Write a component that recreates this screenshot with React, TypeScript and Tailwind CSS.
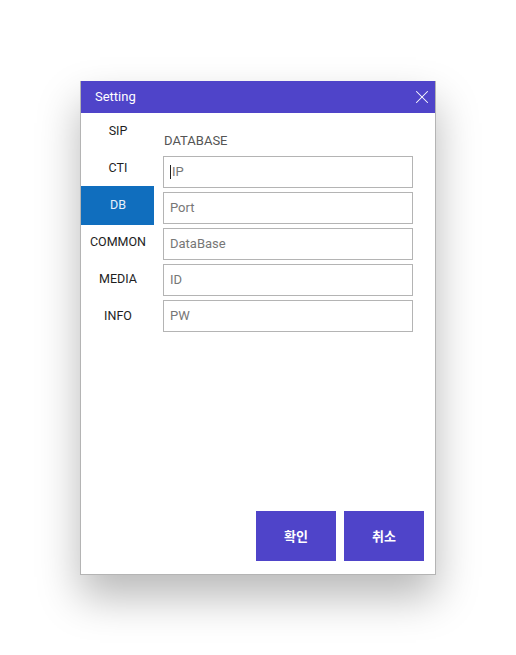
import { X } from "lucide-react";

const menus = ["SIP", "CTI", "DB", "COMMON", "MEDIA", "INFO"];
const fields = ["IP", "Port", "DataBase", "ID", "PW"];

export default function App() {
  return (
    <div className="h-screen w-full bg-white flex items-center justify-center font-['Roboto',sans-serif]">
      <div className="w-[356px] h-[494px] bg-white border border-t-0 border-[#b4b4b4] shadow-[0_22px_40px_rgba(0,0,0,0.28)] flex flex-col">
        {/* Header */}
        <div className="h-8 bg-[#4f44c9] flex items-center justify-between pl-[14px] pr-[2px]">
          <span className="text-[13px] text-white">Setting</span>
          <X className="w-[22px] h-[22px] text-white" strokeWidth={1.1} />
        </div>

        {/* Body */}
        <div className="flex-1 flex">
          {/* Sidebar */}
          <div className="w-[73px] flex flex-col">
            {menus.map((m) =>
              m === "DB" ? (
                <div
                  key={m}
                  className="h-[39px] -my-px flex items-center justify-center pl-px bg-[#106ebe] text-[12.5px] text-[#e8f0fa]"
                >
                  {m}
                </div>
              ) : (
                <div
                  key={m}
                  className="h-[37px] flex items-center justify-center pl-px text-[12.5px] text-[#1e1e1e]"
                >
                  {m}
                </div>
              )
            )}
          </div>

          {/* Content */}
          <div className="flex-1 flex flex-col pl-[9px] pr-[22px] pt-5">
            <div className="h-4 leading-4 mb-[7px] pl-px text-[13px] text-[#555]">DATABASE</div>
            <div className="flex flex-col gap-1">
              {fields.map((f, i) => (
                <div
                  key={f}
                  className="h-8 border border-[#b4b4b4] flex items-center pl-[6px] text-[13px] text-[#777]"
                >
                  {i === 0 && <span className="w-px h-[14px] bg-[#222] mr-px" />}
                  {f}
                </div>
              ))}
            </div>
          </div>
        </div>

        {/* Buttons */}
        <div className="flex justify-end gap-2 pr-[11px] pb-[13px]">
          <button className="w-20 h-[50px] bg-[#4f44c9] text-white text-[13px] font-bold font-['Noto_Sans_CJK_KR',sans-serif]">
            확인
          </button>
          <button className="w-20 h-[50px] bg-[#4f44c9] text-white text-[13px] font-bold font-['Noto_Sans_CJK_KR',sans-serif]">
            취소
          </button>
        </div>
      </div>
    </div>
  );
}
